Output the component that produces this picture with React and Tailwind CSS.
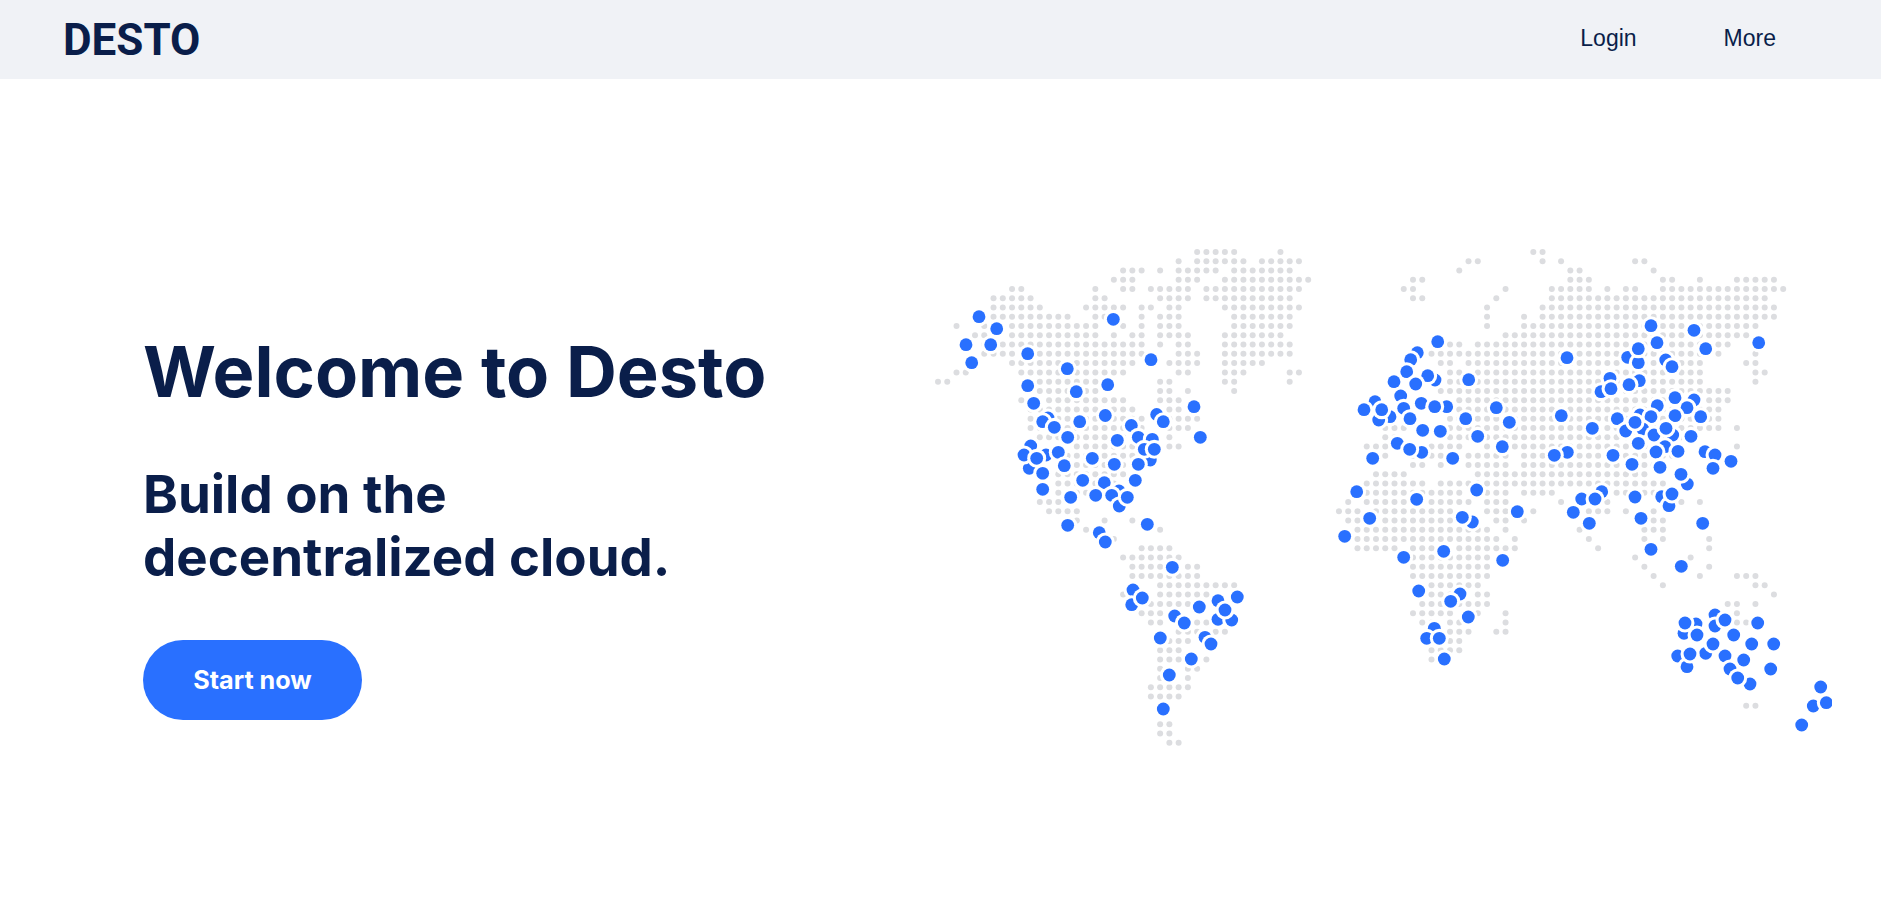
import React from 'react';

// rows of the dotted map: row index -> columns, [from, to] or a single column
const americas = {
  0: [[28, 32], 37], 1: [26, [28, 33], [35, 39]], 2: [[20, 22], 24, [26, 30], [32, 38]],
  3: [[19, 21], [26, 28], [31, 40]], 4: [8, 9, 17, 20, 21, [23, 27], [29, 39]],
  5: [[6, 10], 17, 18, [24, 27], [29, 38]], 6: [[6, 11], [16, 20], 22, 23, 25, 26, [31, 39]],
  7: [[6, 14], [17, 19], 22, [24, 26], [32, 38]], 8: [2, 5, [8, 17], 20, 22, [24, 26], [32, 38]],
  9: [4, 5, [8, 17], 19, 21, 22, [24, 27], [31, 37]], 10: [5, [7, 22], 24, 26, 27, [31, 38]],
  11: [[5, 8], [11, 22], [26, 28], [31, 38]], 12: [[8, 21], [25, 28], [31, 35]],
  13: [2, 3, [9, 20], 26, 27, [31, 33], 38, 39], 14: [0, 1, [11, 18], 24, 25, 31, 32, 38],
  15: [[11, 17], 24, 25, 27, 32], 16: [9, [12, 20], [24, 26]], 17: [[10, 21], 25, 26],
  18: [[10, 22], [25, 28]], 19: [[10, 22], [25, 27]], 20: [[11, 23], 25], 21: [[15, 23], 25, 26],
  22: [[13, 23]], 23: [[13, 21]], 24: [[13, 20]], 25: [[13, 19]], 26: [13, [15, 17]],
  27: [[11, 13]], 28: [[12, 15]], 29: [15, 18, 21], 30: [16, 24], 31: [19],
  32: [[22, 25]], 33: [[20, 26]], 34: [[21, 25], 27, 28], 35: [[21, 28]], 36: [[24, 32]],
  37: [20, [24, 29]], 38: [[22, 27]], 39: [[22, 24]], 40: [23, 24, 28, 29], 41: [[26, 31]],
  42: [[25, 27]], 43: [[24, 26]], 44: [[24, 26], 29], 45: [24, 27, 28], 46: [24, 27],
  47: [[23, 27]], 48: [[23, 26]], 51: [24, 25], 52: [24, 25], 53: [25, 26],
};

const oldWorld = {
  0: [13, 14], 1: [6, 7, 14, 16, 24, 25], 2: [5, 17, 18, 26], 3: [0, 1, [17, 19], 27, 28, 31, [35, 39]],
  4: [-1, 0, 10, [15, 19], 21, 23, 24, [27, 40]], 5: [0, 1, 9, [15, 38]], 6: [8, [14, 39]],
  7: [8, 12, [14, 39]], 8: [8, [12, 37]], 9: [[10, 36]], 10: [[3, 5], [7, 34]],
  11: [[2, 31], 33, 37], 12: [3, 4, [6, 31], 36, 37], 13: [4, 5, [7, 31], 37, 38],
  14: [4, 5, [7, 31], 37], 15: [[3, 34]], 16: [[5, 34]], 17: [[5, 33]], 18: [[4, 33]],
  19: [[-3, -1], [3, 33], 35], 20: [-3, -2, [4, 29]], 21: [[-5, 5], 8, [11, 28], 35],
  22: [-3, [0, 3], [6, 10], [12, 29]], 23: [0, 1, 3, [6, 10], [12, 27]], 24: [[-4, -1], [7, 25]],
  25: [[-5, 1], [3, 27]], 26: [[-5, 5], [8, 10], [12, 15], [22, 27]],
  27: [-7, [-5, -1], [2, 6], [8, 10], 16, 21, 29, 31],
  28: [-8, -7, -6, [-4, 4], [8, 10], 13, [19, 21], 23, 26],
  29: [-7, -6, [-3, 4], 9, 10, 12, 26, 27], 30: [[-6, 8], 10, 18, [25, 27]],
  31: [[-6, 9], 11, 19, 25, 27, 32], 32: [[-6, -2], 0, 1, 2, [5, 11], 20, 32], 33: [[0, 8], 24, 30],
  34: [[0, 8], 25, 32], 35: [[0, 8], 26, 31, [35, 37]], 36: [[2, 7], 27, 37, 38], 37: [2, 3, 4, 7, 8, 39],
  38: [[1, 8], 34, 35, 37], 39: [[0, 4], 7, 10, 35], 40: [1, 2, 4, 5, 10, 35, 36], 41: [4, 5, 6, 9, 10],
  42: [4, 5], 43: [[2, 5]], 44: [2], 49: [36, 37],
};

// blue markers in page pixels, ones lying underneath come first
const markers = [
  [979, 316.7], [996.7, 328.7], [966, 344.7], [990.7, 344.7], [971.7, 362.7], [1027.7, 353.7], [1113.3, 319.3],
  [1151, 359.7], [1067.3, 368.7], [1027.7, 385.7], [1107.7, 384.7], [1076.3, 391.7], [1033.7, 403.3], [1194, 406.7],
  [1200.3, 437.3], [1156.7, 414.5], [1163.3, 421.7], [1048, 418], [1042.7, 421.7], [1054.3, 427.3], [1079.7, 421.7],
  [1105.3, 415.5], [1131.3, 425.5], [1067.7, 437.3], [1117.3, 440.3], [1138.3, 437.3], [1152.3, 439.3], [1150.3, 460],
  [1144.3, 449.3], [1154.3, 449.3], [1030.7, 446], [1046, 455], [1029.3, 468.3], [1024, 455], [1036.7, 458.3],
  [1058.3, 452.3], [1064.3, 465.7], [1042.7, 473.3], [1092.3, 458.3], [1114.3, 464.3], [1138.3, 464.3], [1042.7, 489.3],
  [1082.7, 480.3], [1104.3, 482.7], [1135.3, 480.3], [1070.7, 497.3], [1095.7, 495.3], [1119, 491], [1111.7, 495.3],
  [1119.3, 506], [1127.3, 497.3], [1067.7, 525.3], [1147.3, 524.3], [1099.3, 532.7], [1105.3, 542],
  [1172.3, 567.3], [1133, 590], [1131.7, 604.7], [1142.3, 598], [1218, 600.7], [1218, 619.3], [1231.7, 620],
  [1237.3, 597], [1225, 610], [1199.3, 607], [1174.7, 616], [1184.3, 623], [1160.3, 638], [1205, 637.3], [1211, 644],
  [1191.3, 659], [1169.3, 675], [1163.3, 709],
  [1416.7, 499.3], [1369.7, 518.3], [1344.7, 536.3], [1472.3, 522], [1462.3, 517.3], [1476.7, 490], [1517.3, 511.7],
  [1403.7, 557.3], [1443.7, 551.3], [1502.7, 560.3], [1418.7, 591], [1460, 594], [1450.7, 601.3], [1468.3, 617],
  [1434.3, 628.3], [1426.7, 638.3], [1439.3, 638.3], [1444.3, 659],
  [1437.7, 341.7], [1417.3, 352.7], [1410.7, 359.7], [1406.7, 371.7], [1394, 381.7], [1435, 380], [1427.7, 375.7],
  [1415.7, 384], [1468.7, 379.7], [1400.7, 396], [1375, 401.7], [1390, 416.7], [1378.7, 420], [1364, 409.7],
  [1381.7, 409.7], [1403.7, 408.3], [1410, 418.7], [1421.3, 403.3], [1446.7, 406.7], [1434.7, 406.7], [1496.3, 407.7],
  [1465.7, 418.7], [1509.3, 422.3], [1422.7, 430.3], [1440.3, 431.3], [1477.7, 436.3], [1502.3, 446.7], [1397.3, 443.3],
  [1421.7, 452.3], [1409.7, 449.3], [1372.7, 458.3], [1452.7, 458.3], [1356.7, 491.7],
  [1567, 357.7], [1651, 325.7], [1694, 330.3], [1657, 342.7], [1705.7, 348.7], [1758.7, 342.7], [1627.7, 357.3],
  [1638.3, 362.7], [1638.3, 348.7], [1665.7, 360], [1672, 366.7], [1610, 378.3], [1639.3, 380.7], [1629, 384.7],
  [1601, 391.7], [1611, 388.7], [1561.3, 415.7], [1592.3, 428.3], [1617.3, 418.7], [1657.3, 405.7], [1675, 397.7],
  [1694, 400], [1687, 407.7], [1675, 415.7], [1700.7, 416.7], [1640, 415], [1651, 416.7], [1642.7, 429], [1625.7, 431],
  [1635, 422.3], [1654, 435], [1672.7, 435], [1666, 428.3], [1691, 436.3], [1638.3, 443.3], [1665, 446.7], [1656, 452],
  [1678, 451.3], [1567.3, 452.3], [1554.3, 455.3], [1613, 455.3], [1632, 464.3], [1660, 467.3], [1705, 451.7],
  [1715, 455], [1731, 461.3], [1713, 468.3], [1687.3, 484], [1681, 474.3], [1661.7, 496.7], [1669, 505.7], [1672, 494],
  [1635, 497], [1601.7, 491.7], [1581.7, 499], [1595, 499], [1573.3, 512.3], [1589.3, 523.3], [1641, 518.3],
  [1702.7, 523.3], [1651, 549.3], [1681.3, 566.3],
  [1715, 615], [1715, 626], [1725, 620], [1696, 624], [1684, 633.3], [1685, 623], [1697, 635], [1757.7, 623],
  [1733.7, 635], [1705.7, 653.3], [1713, 644], [1751.7, 644], [1773.7, 644], [1677.7, 656], [1687, 666.7], [1690, 654],
  [1725, 656], [1730, 669], [1743.7, 660], [1750, 684], [1737.7, 678], [1770.7, 669], [1820.7, 687], [1813.3, 706],
  [1826.3, 702.7], [1801.7, 725],
];

const PITCH = 9.255;

const expand = (rows, x0) => {
  const dots = [];
  Object.entries(rows).forEach(([row, cols]) => {
    cols.forEach((col) => {
      const [from, to] = Array.isArray(col) ? col : [col, col];
      for (let c = from; c <= to; c++) {
        dots.push([x0 + c * PITCH, 252 + row * 9.26]);
      }
    });
  });
  return dots;
};

const WorldMap = () => {
  const dots = [...expand(americas, 938), ...expand(oldWorld, 1413)];
  return (
    <svg width="902" height="505" viewBox="930 245 902 505" className="shrink-0 block">
      {dots.map(([x, y], i) => (
        <circle key={i} cx={x} cy={y} r="3" fill="#dcdde0" />
      ))}
      {markers.map(([x, y], i) => (
        <g key={i}>
          <circle cx={x} cy={y} r="9.5" fill="#ffffff" />
          <circle cx={x} cy={y} r="6.4" fill="#2970ff" />
        </g>
      ))}
    </svg>
  );
};

export default function App() {
  return (
    <div className="min-h-screen bg-white text-[#0a1e4a] overflow-hidden font-['Inter',sans-serif]">
      <header className="h-[79px] bg-[#f0f2f6] flex items-center justify-between pl-[63px] pr-[105px]">
        <div className="font-['Roboto',sans-serif] font-bold text-[44px] leading-none">DESTO</div>
        <nav className="flex items-center gap-[87px] font-['Liberation_Sans',sans-serif] text-[23px] -mt-[2px]">
          <a>Login</a>
          <a>More</a>
        </nav>
      </header>

      <main className="h-[837px] flex items-center justify-between pl-[143px] pr-[49px]">
        <div className="mt-[55px]">
          <h1 className="text-[70.4px] leading-[84px] font-bold whitespace-nowrap">Welcome to Desto</h1>
          <h2 className="mt-[49px] text-[52.8px] leading-[63px] font-bold">
            Build on the
            <br />
            decentralized cloud.
          </h2>
          <button className="mt-[51px] w-[219px] h-[80px] pt-[2px] rounded-[40px] bg-[#2970ff] text-white text-[25.2px] font-bold">
            Start now
          </button>
        </div>
        <WorldMap />
      </main>
    </div>
  );
}
